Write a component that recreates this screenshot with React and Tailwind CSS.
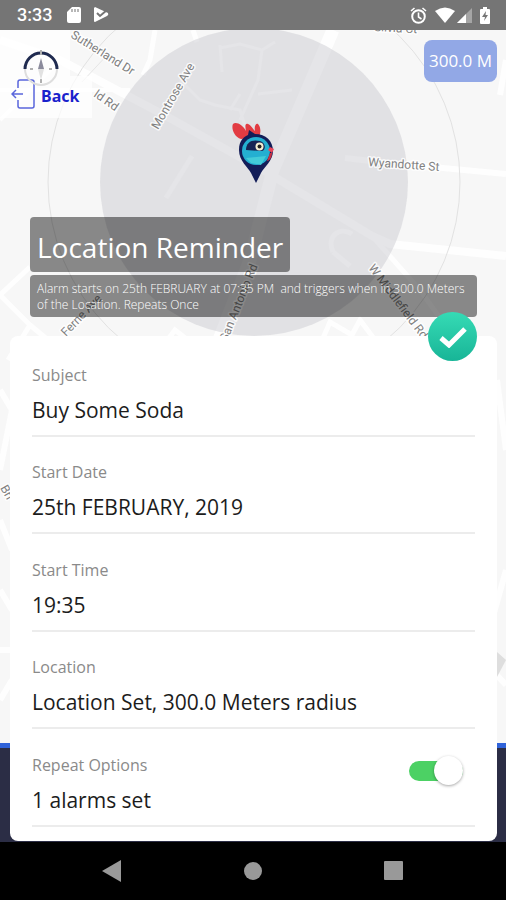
import React, { useState } from "react";

const streets = [
  { name: "Sutherland Dr", x: 70, y: 7, angle: 32, size: 12 },
  { name: "Montrose Ave", x: 158, y: 100, angle: -60, size: 12 },
  { name: "Wyandotte St", x: 368, y: 136, angle: 4, size: 12 },
  { name: "San Antonio Rd", x: 227, y: 312, angle: -68, size: 12 },
  { name: "W Middlefield Rd", x: 368, y: 238, angle: 53, size: 12 },
  { name: "Ferne Ave", x: 66, y: 307, angle: -46, size: 12 },
  { name: "ld Rd", x: 93, y: 66, angle: 35, size: 12 },
  { name: "Silvia Ct", x: 374, y: 1, angle: 3, size: 12 },
  { name: "Bri", x: 0, y: 458, angle: 60, size: 12 },
];

function CityMap() {
  return (
    <svg
      aria-hidden="true"
      className="block min-h-0 w-full flex-1"
      viewBox="0 0 506 713"
      preserveAspectRatio="xMidYMin slice"
    >
      <rect width="506" height="713" fill="#f7f7f7" />
      <g stroke="#fefefe" fill="none">
        <path d="M0 10 L60 30 L166 86 L263 140 L372 206 L390 214 L506 226" strokeWidth="8" />
        <path d="M333 0 L273 140 L250 230 L215 320" strokeWidth="13" />
        <path d="M345 128 L380 132 L506 144" strokeWidth="6" />
        <path d="M192 126 L166 168" strokeWidth="5" />
        <path d="M155 0 L150 30 L143 45 M193 0 L197 12 M372 206 L420 260 L470 330" strokeWidth="5" />
        <path d="M0 60 L130 60 M60 30 L0 90" strokeWidth="4" />
        <path d="M0 265 L30 237 M0 265 L30 295 L8 330 M30 295 L60 320" strokeWidth="5" />
        <path d="M180 50 L200 70 L215 75 L240 80 L248 105 M220 15 L222 42 M220 18 L240 14 L262 20 L258 50 L240 90 M258 64 L292 60 M240 64 L230 80 M262 20 L275 12" strokeWidth="3" />
        <path d="M333 222 C326 206 340 196 352 204 M333 222 L350 236 M160 320 L175 300 L198 318 M320 315 L330 292 L352 305 L360 290 L375 310" strokeWidth="5" />
        <path d="M506 30 L500 65 M0 360 L12 380 L0 440 M0 490 L12 520 M0 560 L12 580 M12 620 L0 620 M0 670 L12 650 M497 350 L506 420 M506 540 L492 590 M492 640 L506 655" strokeWidth="6" />
      </g>
      <path d="M497 622 L506 630 L497 647 Z" fill="#dedede" />
      <circle cx="254" cy="152" r="154" fill="#cdcdd2" fillOpacity="0.52" />
      <path d="M110 22 L82 52" stroke="#e6e6e6" strokeWidth="1" />
      <circle cx="254" cy="152" r="206" fill="none" stroke="#e2e2e2" strokeWidth="1" />
      <g
        fill="#808080"
        stroke="#ffffff"
        strokeOpacity="0.8"
        strokeWidth="3"
        strokeLinejoin="round"
        paintOrder="stroke"
        className="font-['Roboto',sans-serif]"
      >
        {streets.map((s) => (
          <text key={s.name} fontSize={s.size} transform={`translate(${s.x} ${s.y}) rotate(${s.angle})`}>
            {s.name}
          </text>
        ))}
      </g>
      <g>
        <path d="M241 109 C234 107 231 98 233 94 C236 91 243 95 246 101 C245 96 245 93 248 94 C251 95 253 99 255 101 C254 96 256 93 258 94 C261 97 261 103 259 107 Z" fill="#e23b42" />
        <path d="M249 100 L255 104 C266 104 273 111 273 121 C273 131 264 137 261 143 L256 153 L251 143 C248 137 239 131 239 120 C239 110 244 107 248 105 Z" fill="#131d58" />
        <circle cx="256" cy="121" r="14" fill="#24afd1" />
        <path d="M246 128 L266 126 L261 135 L251 133 Z" fill="#43cbd8" />
        <path d="M246 120 C246 112 252 109 260 111 C266 113 266 120 262 121 Z" fill="#172454" />
        <circle cx="259.500" cy="116.500" r="4" fill="#f5efd2" />
        <circle cx="259.500" cy="116.500" r="2" fill="#222222" />
        <path d="M268 120 L270 117 L274 119 L272 123 Z" fill="#e9475a" />
        <path d="M272 123 C272 128 269 131 267 131 L270 123 Z" fill="#c92f43" />
      </g>
    </svg>
  );
}

function StatusBar() {
  return (
    <header className="flex h-[30px] shrink-0 items-center justify-between bg-[#757575] pr-[16px] pl-[17px] text-white">
      <div className="flex items-center">
        <time className="w-[50px] font-['Roboto',sans-serif] text-[18px] leading-5 font-medium">3:33</time>
        <svg aria-hidden="true" width="14" height="16" viewBox="0 0 14 16">
          <path d="M5 0H12Q14 0 14 2V14Q14 16 12 16H2Q0 16 0 14V5Z" fill="#fff" />
          <path d="M5 2V5M8 2V5M11 2V5" stroke="#a0a0a0" strokeWidth="1.500" />
        </svg>
        <svg aria-hidden="true" className="ml-[13px]" width="15" height="16" viewBox="0 0 15 16">
          <path d="M1 0L14 6Q15 8 13 9L1 15Q0 15 0 14V1Z" fill="#fff" />
          <path d="M3 6L6 9L13 3" fill="none" stroke="#757575" strokeWidth="2" />
        </svg>
      </div>
      <div className="flex items-center">
        <svg aria-hidden="true" width="17" height="17" viewBox="0 0 17 17" fill="none" stroke="#fff" strokeWidth="2">
          <circle cx="8.500" cy="9.500" r="6.300" />
          <path d="M8.500 5.500V10L11.500 12M1 4L4.500 1M16 4L12.500 1" strokeWidth="1.600" />
        </svg>
        <svg aria-hidden="true" className="ml-2" width="20" height="16" viewBox="0 0 20 16">
          <path d="M0 4Q10 -3 20 4L10 16Z" fill="#fff" />
        </svg>
        <svg aria-hidden="true" className="ml-[2px]" width="15" height="15" viewBox="0 0 15 15">
          <path d="M15 0V15H0Z" fill="#a5a5a5" />
          <path d="M9 6V15H0Z" fill="#fff" />
        </svg>
        <svg aria-hidden="true" className="ml-[8px]" width="10" height="17" viewBox="0 0 10 17">
          <path d="M3 0H7V2H9Q10 2 10 3V16Q10 17 9 17H1Q0 17 0 16V3Q0 2 1 2H3Z" fill="#fff" />
          <path d="M6 4L2 10H5L4 14L8 8H5.500Z" fill="#757575" />
        </svg>
      </div>
    </header>
  );
}

function BackButton() {
  return (
    <button type="button" className="flex h-[88px] w-[92px] flex-col items-start">
      <span className="z-10 flex h-[46px] w-[70px] shrink-0 items-end bg-white/70 pl-[23px]">
        <svg aria-hidden="true" className="-mb-[10px] shrink-0" width="36" height="36" viewBox="0 0 36 36" fill="none">
          <circle cx="18" cy="19" r="16" stroke="#dedede" strokeWidth="2" />
          <path d="M2 19A16 16 0 0 1 34 19" stroke="#202b50" strokeWidth="3" />
          <path d="M18 0V5M7 19H10M26 19H29M18 29V33" stroke="#b0b0b0" strokeWidth="2" />
          <path d="M18 8L21 19H15Z" fill="#8b8b9c" />
          <path d="M18 30L21 19H15Z" fill="#e2e2e2" />
        </svg>
      </span>
      <span className="flex w-full flex-1 items-center gap-[6px] bg-white/70 pb-[6px] pl-[11px]">
        <svg aria-hidden="true" width="24" height="30" viewBox="0 0 24 30" fill="none" stroke="#5a66dc" strokeWidth="1.500">
          <path d="M7 9V3Q7 1 9 1H21Q23 1 23 3V27Q23 29 21 29H9Q7 29 7 27V21M12 15H1M5 11L1 15L5 19" />
        </svg>
        <span className="pt-1 font-['Noto_Sans',sans-serif] text-[16px] leading-5 font-bold text-[#1a22cc]">Back</span>
      </span>
    </button>
  );
}

function Field({ id, label, value, children }) {
  return (
    <div className="flex min-h-[90px] flex-1 items-end border-b-2 border-[#ececec]">
      <div className="flex min-w-0 flex-1 flex-col pb-[10px]">
        <label htmlFor={id} className="text-[16px] leading-6 text-[#8a8a8a]">
          {label}
        </label>
        <input
          id={id}
          type="text"
          defaultValue={value}
          className="mt-[8px] h-[30px] w-full bg-transparent text-[21px] leading-[30px] text-[#1c1c1c] outline-none"
        />
      </div>
      {children}
    </div>
  );
}

export default function App() {
  const [repeat, setRepeat] = useState(true);
  return (
    <div className="flex min-h-screen flex-col bg-black font-['Open_Sans','Noto_Sans',sans-serif]">
      <StatusBar />
      <main className="relative isolate flex flex-1 flex-col">
        <div className="absolute inset-0 -z-10 flex flex-col">
          <CityMap />
          <div className="h-[5px] bg-[#2f62d9]" />
          <div className="h-[94px] bg-[#2b2d45]" />
        </div>

        <div className="flex items-start justify-between pr-[9px]">
          <BackButton />
          <p className="mt-[10px] rounded-lg bg-[#92a8e6] px-[5px] py-[9px] text-[17px] leading-6 text-white">300.0 M</p>
        </div>

        <div className="mt-[99px] flex flex-col items-start gap-[3px] pr-[29px] pl-[30px] text-white">
          <h1 className="rounded bg-black/45 px-[7px] pt-[10px] pb-[5px] text-[28px] leading-10">Location Reminder</h1>
          <p className="w-full rounded bg-black/45 px-[7px] pt-[6px] pb-[4px] text-[12px] leading-4 font-light whitespace-pre-wrap">
            {"Alarm starts on 25th FEBRUARY at 07:35 PM  and triggers when in 300.0 Meters of the Location. Repeats Once"}
          </p>
        </div>

        <form className="relative mt-[19px] mr-[9px] mb-px ml-[10px] flex flex-1 flex-col rounded-lg bg-white pt-[3px] pr-[22px] pb-[14px] pl-[22px]">
          <button
            type="button"
            aria-label="Save reminder"
            className="absolute -top-[24px] right-[20px] flex size-[49px] items-center justify-center rounded-full bg-gradient-to-b from-[#35dbb5] to-[#17b597]"
          >
            <svg aria-hidden="true" width="28" height="22" viewBox="0 0 28 22" fill="none">
              <path d="M2 12L10 19L26 3" stroke="#fff" strokeWidth="5" />
            </svg>
          </button>
          <Field id="subject" label="Subject" value="Buy Some Soda" />
          <Field id="start-date" label="Start Date" value="25th FEBRUARY, 2019" />
          <Field id="start-time" label="Start Time" value="19:35" />
          <Field id="location" label="Location" value="Location Set, 300.0 Meters radius" />
          <Field id="repeat-options" label="Repeat Options" value="1 alarms set">
            <input
              type="checkbox"
              role="switch"
              aria-label="Repeat"
              checked={repeat}
              onChange={(e) => setRepeat(e.target.checked)}
              className="mr-[12px] mb-[44px] flex h-[20px] w-[54px] shrink-0 appearance-none items-center rounded-full bg-gray-300 before:size-[29px] before:shrink-0 before:rounded-full before:bg-white before:shadow-[0_1px_3px_rgba(0,0,0,0.35)] checked:justify-end checked:bg-[#4cd164]"
            />
          </Field>
        </form>
      </main>

      <nav className="flex h-[58px] shrink-0 items-center justify-center gap-[121px] bg-black">
        <button type="button" aria-label="Back">
          <svg width="20" height="22" viewBox="0 0 20 22">
            <path d="M19 0V22L0 11Z" fill="#999" />
          </svg>
        </button>
        <button type="button" aria-label="Home">
          <svg width="20" height="20" viewBox="0 0 20 20">
            <circle cx="10" cy="10" r="9" fill="#999" />
          </svg>
        </button>
        <button type="button" aria-label="Recent apps">
          <svg width="20" height="20" viewBox="0 0 20 20">
            <rect width="19" height="19" rx="1" fill="#999" />
          </svg>
        </button>
      </nav>
    </div>
  );
}
